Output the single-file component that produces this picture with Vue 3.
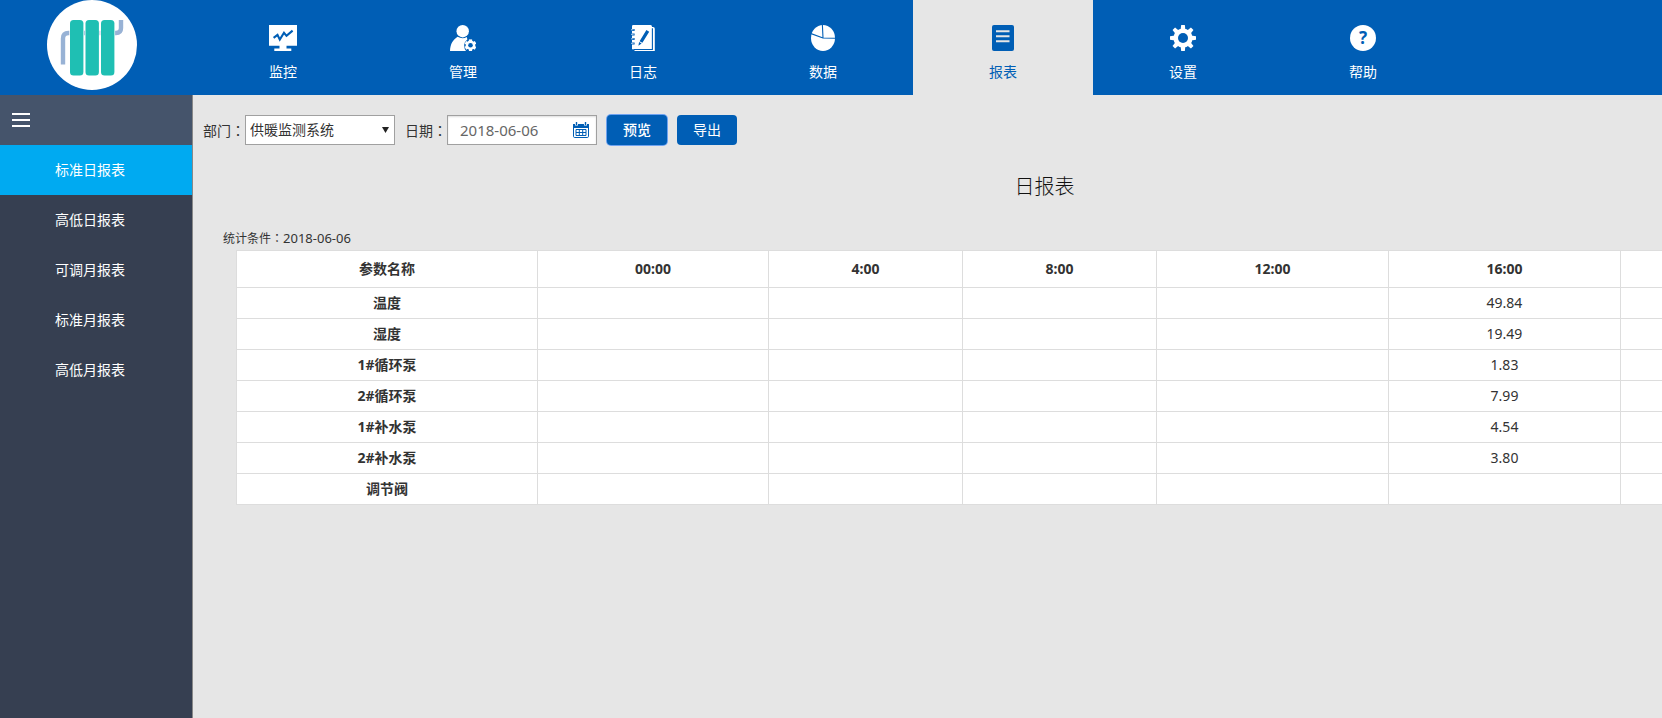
<script setup>
import { ref } from 'vue'

const navItems = [
  { id: 'monitor', label: '监控' },
  { id: 'manage', label: '管理' },
  { id: 'log', label: '日志' },
  { id: 'data', label: '数据' },
  { id: 'report', label: '报表' },
  { id: 'settings', label: '设置' },
  { id: 'help', label: '帮助' }
]
const activeNav = ref('report')

const reports = ['标准日报表', '高低日报表', '可调月报表', '标准月报表', '高低月报表']
const activeReport = ref('标准日报表')

const date = ref('2018-06-06')
const hours = ['00:00', '4:00', '8:00', '12:00', '16:00', '']
const rows = [
  { name: '温度', values: ['', '', '', '', '49.84', ''] },
  { name: '湿度', values: ['', '', '', '', '19.49', ''] },
  { name: '1#循环泵', values: ['', '', '', '', '1.83', ''] },
  { name: '2#循环泵', values: ['', '', '', '', '7.99', ''] },
  { name: '1#补水泵', values: ['', '', '', '', '4.54', ''] },
  { name: '2#补水泵', values: ['', '', '', '', '3.80', ''] },
  { name: '调节阀', values: ['', '', '', '', '', ''] }
]
const toothAngles = [0, 45, 90, 135, 180, 225, 270, 315]
const smallToothAngles = [0, 60, 120, 180, 240, 300]
</script>

<template>
  <div class="app">
    <header class="header">
      <div class="brand">
        <svg class="logo" viewBox="0 0 90 90">
          <circle cx="45" cy="45" r="45" fill="#fff" />
          <path d="M16 64.5V38.5Q16 33 21.5 33H69Q74 33 74 28V20" fill="none" stroke="#98b2d5" stroke-width="4.4" />
          <g fill="#1fbfb3" stroke="#fff" stroke-width="1.4" paint-order="stroke">
            <rect x="23" y="20" width="13.4" height="55.6" rx="3.5" />
            <rect x="38.5" y="20" width="13.4" height="55.6" rx="3.5" />
            <rect x="54" y="20" width="13.4" height="55.6" rx="3.5" />
          </g>
        </svg>
      </div>
      <nav class="nav">
        <a
          v-for="item in navItems"
          :key="item.id"
          href="#"
          class="nav-item"
          :class="{ active: item.id === activeNav }"
          @click.prevent="activeNav = item.id"
        >
          <svg v-if="item.id === 'monitor'" class="nav-icon" viewBox="0 0 28 26">
            <path d="M0 0H28V20.7H17.5V23.6H22.3V26H5.3V23.6H10.5V20.7H0Z" fill="currentColor" />
            <path d="M4.6 12.8L8.5 9.8L10.8 14.6L15 7.8L17.5 10.8L23.6 5.6" class="cut-line" stroke-width="2.1" />
          </svg>
          <svg v-else-if="item.id === 'manage'" class="nav-icon" viewBox="0 0 26 26">
            <circle cx="12.7" cy="6.2" r="6.2" fill="currentColor" />
            <path d="M0 26C.3 19 3 14.6 7.6 11.8Q12.5 14.6 16.8 12L17.4 14.4Q13.8 17 14.2 21Q14.3 24 16 26Z" fill="currentColor" />
            <g fill="currentColor">
              <rect v-for="a in smallToothAngles" :key="a" x="18.9" y="14.4" width="3.2" height="4" :transform="`rotate(${a} 20.5 20.3)`" />
              <circle cx="20.5" cy="20.3" r="4.7" />
            </g>
            <circle cx="20.5" cy="20.3" r="2.3" class="cut" />
          </svg>
          <svg v-else-if="item.id === 'log'" class="nav-icon" viewBox="0 0 24 26">
            <path d="M3.5 2H22Q23.8 2 23.8 3.8V26H3.5Z" fill="currentColor" />
            <path d="M1 1.3Q1 0 2.3 0H19.5Q21 0 21 1.5V24.6H2.3Q1 24.6 1 23.3Z" fill="currentColor" />
            <path d="M21.4 3.2V24.5H2.5" class="cut-line" stroke-width="1.1" />
            <path d="M0 5H3.6M0 9.5H3.6M0 14H3.6M0 18.5H3.6" class="cut-line" stroke-width="1.9" />
            <path d="M0 4.8H2.6M0 9.3H2.6M0 13.8H2.6M0 18.3H2.6" fill="none" stroke="currentColor" stroke-width=".7" />
            <path d="M15.4 5.1L18.2 6.7L11.4 17.8L8.6 16.2Z M8.1 17L10.6 18.5L7.4 20.8Z" class="cut" />
          </svg>
          <svg v-else-if="item.id === 'data'" class="nav-icon" viewBox="0 0 24 26">
            <ellipse cx="12" cy="13" rx="12" ry="13" fill="currentColor" />
            <path d="M11.4 0L12 13L24.5 13.2M12 13L0 8.6" class="cut-line" stroke-width="1.1" />
          </svg>
          <svg v-else-if="item.id === 'report'" class="nav-icon" viewBox="0 0 22 26">
            <rect width="22" height="26" rx="2" fill="currentColor" />
            <path d="M4 6.3H17.5M4 11.3H17.5M4 16.3H17.5" class="cut-line" stroke-width="2" />
          </svg>
          <svg v-else-if="item.id === 'settings'" class="nav-icon" viewBox="0 0 26 26">
            <g fill="currentColor">
              <path v-for="a in toothAngles" :key="a" d="M10.6 5L11.2 0H14.8L15.4 5Z" :transform="`rotate(${a} 13 13)`" />
              <circle cx="13" cy="13" r="9.6" />
            </g>
            <circle cx="13" cy="13" r="5" class="cut" />
          </svg>
          <svg v-else class="nav-icon" viewBox="0 0 26 26">
            <circle cx="13" cy="13" r="13" fill="currentColor" />
            <text x="13" y="19" class="cut question" text-anchor="middle">?</text>
          </svg>
          <span>{{ item.label }}</span>
        </a>
      </nav>
    </header>

    <div class="body">
      <aside class="sidebar">
        <button class="toggle" type="button" aria-label="菜单">
          <svg class="burger" viewBox="0 0 18 14">
            <path d="M0 1H18M0 7H18M0 13H18" stroke="#fff" stroke-width="2" />
          </svg>
        </button>
        <a
          v-for="name in reports"
          :key="name"
          href="#"
          class="side-item"
          :class="{ active: name === activeReport }"
          @click.prevent="activeReport = name"
        >{{ name }}</a>
      </aside>

      <main class="main">
        <form class="toolbar" @submit.prevent>
          <label for="dept">部门<span class="colon">：</span></label>
          <div class="field">
            <select id="dept" class="control select">
              <option>供暖监测系统</option>
            </select>
            <svg class="arrow" viewBox="0 0 7 6"><path d="M0 0H7L3.5 6Z" fill="#222" /></svg>
          </div>
          <label for="date" class="date-label">日期<span class="colon">：</span></label>
          <div class="field">
            <input id="date" v-model="date" class="control date" type="text" />
            <svg class="calendar" viewBox="0 0 16 16">
              <path d="M.5 5V14.3Q.5 15.5 1.7 15.5H14.3Q15.5 15.5 15.5 14.3V5" fill="none" stroke="#005eb5" />
              <path d="M0 2H2V3.5H5V2H11V3.5H14V2H16V6H0Z" fill="#005eb5" />
              <path d="M3.5 0V3M12.5 0V3" stroke="#005eb5" stroke-width="1.4" />
              <path d="M3 7.5H13V13.5H3ZM3 10.5H13M6.3 7.5V13.5M9.7 7.5V13.5" fill="none" stroke="#005eb5" />
            </svg>
          </div>
          <button type="button" class="btn focused">预览</button>
          <button type="button" class="btn">导出</button>
        </form>

        <section class="sheet">
          <h1 class="title">日报表</h1>
          <p class="condition">统计条件<span class="colon">：</span><span class="condition-date">{{ date }}</span></p>
          <table class="grid">
            <colgroup>
              <col class="col-name" />
              <col class="col-first" />
              <col class="col-narrow" />
              <col class="col-narrow" />
              <col class="col-wide" />
              <col class="col-wide" />
              <col class="col-wide" />
            </colgroup>
            <thead>
              <tr>
                <th scope="col">参数名称</th>
                <th v-for="(hour, i) in hours" :key="i" scope="col">{{ hour }}</th>
              </tr>
            </thead>
            <tbody>
              <tr v-for="row in rows" :key="row.name">
                <th scope="row">{{ row.name }}</th>
                <td v-for="(value, i) in row.values" :key="i">{{ value }}</td>
              </tr>
            </tbody>
          </table>
        </section>
      </main>
    </div>
  </div>
</template>

<style>
body {
  margin: 0;
  background: #e6e6e6;
}
</style>

<style scoped>
.app {
  display: flex;
  flex-direction: column;
  min-height: 100vh;
  overflow: hidden;
  color: #333;
  font-family: "Noto Sans", "Noto Sans CJK SC", sans-serif;
  font-size: 14px;
  line-height: 20px;
}
.app * {
  box-sizing: border-box;
}
.header {
  display: flex;
  height: 95px;
  background: #005eb5;
}
.brand {
  flex: none;
  width: 193px;
  padding-left: 47px;
}
.logo {
  display: block;
  width: 90px;
  height: 90px;
}
.nav {
  display: flex;
}
.nav-item {
  --back: #005eb5;
  display: flex;
  flex-direction: column;
  align-items: center;
  gap: 11px;
  width: 180px;
  padding-top: 25px;
  color: #fff;
  text-decoration: none;
}
.nav-item.active {
  --back: #e6e6e6;
  background: #e6e6e6;
  color: #005eb5;
}
.nav-icon {
  display: block;
  height: 26px;
}
.cut {
  fill: var(--back);
}
.cut-line {
  fill: none;
  stroke: var(--back);
}
.question {
  font-size: 17px;
  font-weight: 700;
}
.body {
  display: flex;
  flex: 1;
}
.sidebar {
  display: flex;
  flex: none;
  flex-direction: column;
  width: 193px;
  border-right: 1px solid #888;
  background: #363f51;
}
.toggle {
  display: flex;
  align-items: center;
  height: 50px;
  padding: 0 12px;
  border: 0;
  background: #45546b;
}
.burger {
  width: 18px;
  height: 14px;
}
.side-item {
  padding-left: 55px;
  color: #fff;
  line-height: 50px;
  text-decoration: none;
}
.side-item.active {
  background: #00aaf1;
}
.main {
  flex: 1;
  min-width: 0;
  padding: 20px 0 0 10px;
}
.toolbar {
  display: flex;
  align-items: center;
}
.colon {
  font-family: "Noto Sans CJK TC", sans-serif;
}
.date-label {
  margin-left: 10px;
}
.field {
  position: relative;
  width: 150px;
}
.control {
  display: block;
  width: 100%;
  height: 30px;
  border: 1px solid #a0a0a0;
  border-radius: 0;
  background: #fff;
  font: inherit;
  color: #333;
  outline: 0;
}
.select {
  padding: 0 20px 0 4px;
  appearance: none;
}
.date {
  padding: 0 30px 0 12px;
  box-shadow: inset 0 1px 2px #ddd;
  color: #666;
  font-size: 15px;
}
.arrow {
  position: absolute;
  top: 12px;
  right: 6px;
  width: 7px;
  height: 6px;
  pointer-events: none;
}
.calendar {
  position: absolute;
  top: 7px;
  right: 8px;
  width: 16px;
  height: 16px;
}
.btn {
  width: 60px;
  height: 30px;
  margin-left: 10px;
  padding: 0;
  border: 0;
  border-radius: 4px;
  background: #005eb5;
  color: #fff;
  font: inherit;
}
.btn.focused {
  box-shadow: 0 0 0 1px #6ea2f0;
  font-weight: 500;
}
.sheet {
  width: max-content;
  padding: 27px 20px 0;
}
.title {
  margin: 0 0 25px;
  color: #111;
  font-size: 20px;
  font-weight: 300;
  line-height: 30px;
  text-align: center;
}
.condition {
  margin: 0;
  font-size: 12px;
  line-height: 22px;
}
.condition-date {
  font-size: 13px;
}
.grid {
  width: 1616px;
  margin: 0 13px;
  border-collapse: collapse;
  table-layout: fixed;
  background: #fff;
  text-align: center;
}
.col-name {
  width: 301px;
}
.col-first {
  width: 231px;
}
.col-wide {
  width: 232px;
}
.col-narrow {
  width: 194px;
}
.grid th,
.grid td {
  height: 31px;
  padding: 0;
  border: 1px solid #ddd;
}
.grid thead th {
  height: 37px;
}
</style>
